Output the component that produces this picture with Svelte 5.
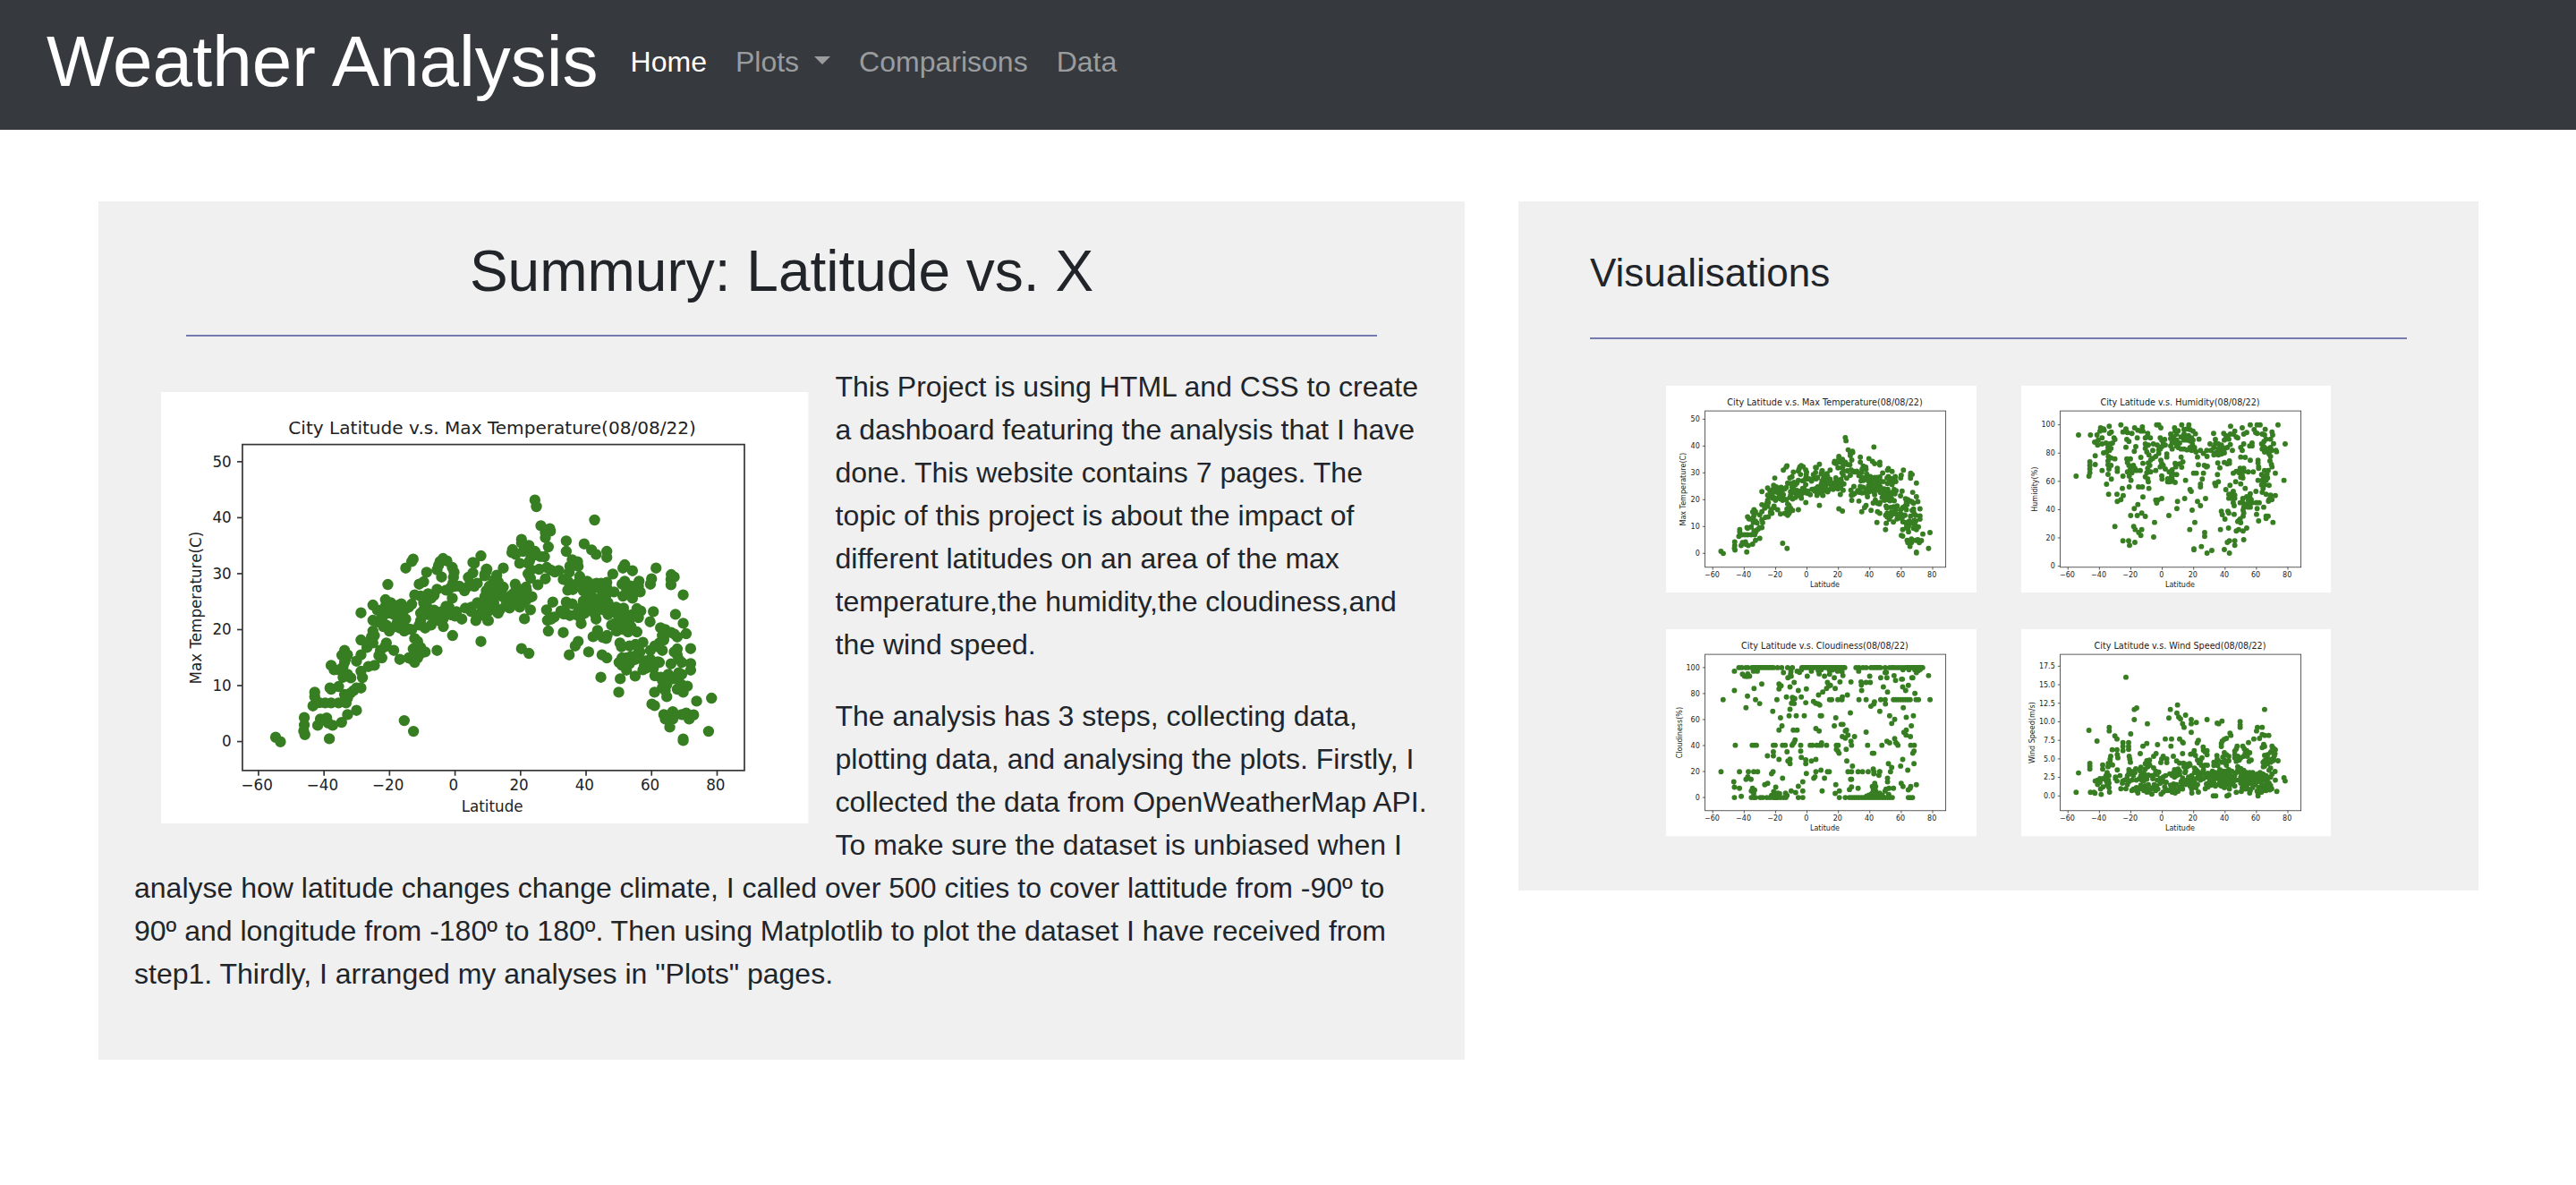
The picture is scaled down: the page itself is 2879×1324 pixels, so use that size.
<script lang="ts">
  type Chart = {
    title: string;
    ylabel: string;
    labelX: number;
    ticks: { y: number; text: string }[];
    origin: [number, number];
    scale: number;
    points: [number, number][];
  };

  const parse = (text: string, shift = 0): [number, number][] =>
    text.split(',').map((pair) => {
      const [x, y] = pair.trim().split(' ').map(Number);
      return [x + shift, y];
    });
  const row = (y: number, xs: number[]): [number, number][] => xs.map((x) => [x, y]);
  const span = (from: number, to: number, step = 8) =>
    Array.from({ length: Math.floor((to - from) / step) + 1 }, (_, i) => from + i * step);
  const axis = (zero: number, top: number, labels: string[]) =>
    labels.map((text, i) => ({ text, y: zero - ((zero - top) * i) / (labels.length - 1) }));
  const dots = (points: [number, number][]) => points.map(([x, y]) => `M${x} ${y}h0`).join('');

  const xTicks = [-60, -40, -20, 0, 20, 40, 60, 80].map((v) => ({
    x: 196.2 + v * 2.186,
    text: v < 0 ? `−${-v}` : `${v}`
  }));

  const temperatureSouth = parse('144 851,160 866,240 785,240 810,238 830,242 842,324 856,285 811,294 790,315 786,320 803,335 811,365 801,385 775,415 761,269 746,275 700,275 715,290 735,310 736,330 736,355 736,380 736,385 720,375 708,395 703,405 695,415 686,430 686,326 686,330 690,355 681,370 650,385 640,396 652,435 651,430 630,455 614,475 610,330 610,340 625,355 625,370 615,375 600,375 560,366 576,385 575,378 590,415 596,430 575,450 550,465 530,470 535,465 515,430 525,470 495,475 510,495 560,490 577,500 585,515 535,510 548,540 560,560 590,470 459,490 465,505 480,525 495,515 475,500 455,430 434,470 408,485 425,500 430,512 390,515 400,530 400,510 415,525 420,540 410,550 410,565 404,570 420,555 430,540 440,520 435,500 440,590 415,600 405,580 420,570 440,580 455,565 465,545 480,560 485,575 495,590 488,600 490,550 470,520 339,580 284,605 254,600 262,610 374,625 338,640 330,650 298,630 378,645 385,655 370,665 385,675 375,685 355,640 400,650 410,630 435,640 425,655 440,675 425,670 440,630 460,625 475,645 485,665 475,680 460,690 450,705 455,706 480,685 560,737 510,736 385,610 520,620 530,605 555,590 585,610 600,625 575,645 565,620 585,630 550,615 560,630 570,600 590,685 290,690 275,695 262,705 252,718 260,700 314,736 282,742 298,740 315,738 335,715 358,730 350,745 345,760 345,777 360,790 345,810 345,820 335,790 315,805 300,810 268,805 265,832 243,850 288,845 310,850 295,715 412,725 415,700 430,710 445,730 440,745 445,750 430,768 455,780 418,800 415,800 430,815 460,825 445,835 430,845 420,830 405,850 400,857 460,865 420,885 420,890 435,860 385,845 380,870 365,880 350,890 330,885 308,870 385,890 370,855 430,875 400,820 400,832 530,575 795,606 831');
  const temperatureNorth = parse('173 56,178 78,373 123,193 142,223 152,208 165,215 158,225 160,208 182,218 213,278 193,278 228,338 203,363 223,378 238,414 228,414 248,128 188,128 200,153 208,140 222,98 222,96 232,108 238,133 228,173 228,180 240,205 246,190 245,160 248,122 268,150 268,155 260,12 288,5 305,67 284,150 303,158 318,160 290,187 288,208 320,183 340,213 282,225 290,253 292,240 297,298 256,316 263,290 278,318 278,305 275,288 298,268 322,285 330,295 340,283 358,300 356,323 312,320 330,335 345,348 328,335 360,350 345,345 370,365 338,380 335,395 335,414 332,375 350,360 360,390 350,405 345,414 350,438 364,434 304,468 284,474 273,500 293,579 284,630 306,640 314,629 322,629 340,670 374,564 320,560 338,474 328,465 338,485 342,480 355,497 345,522 328,520 345,526 364,500 355,468 378,500 385,485 360,495 370,45 308,40 320,32 335,20 345,30 350,45 345,67 348,10 360,20 370,35 370,50 365,60 370,68 382,30 385,10 385,15 400,20 410,10 420,5 440,15 460,30 420,48 434,55 425,35 350,107 338,110 350,143 348,125 355,118 365,100 370,90 378,110 380,130 375,145 360,163 380,80 385,95 390,110 400,122 415,135 400,145 390,88 418,75 410,80 400,65 380,158 424,138 454,128 554,153 570,233 398,212 424,278 398,298 404,260 428,275 432,270 438,290 443,238 448,228 455,215 459,218 495,268 500,320 428,330 415,340 405,335 395,345 425,310 440,325 450,328 470,355 425,350 395,360 400,340 435,375 440,378 455,365 420,375 405,385 410,370 385,350 370,355 380,385 390,400 370,410 380,405 395,418 400,395 385,410 410,405 425,418 440,425 415,445 415,440 430,450 440,470 418,465 430,480 440,460 450,455 465,440 470,430 475,450 480,465 475,480 480,485 498,495 480,488 465,470 490,447 495,515 420,528 428,515 435,520 450,500 440,570 430,559 464,644 439,670 469,515 498,383 493,368 514,380 505,400 516,415 510,412 520,318 530,308 545,288 575,353 565,398 575,414 585,458 535,463 548,490 545,510 540,535 533,520 550,525 565,515 575,505 585,495 580,510 590,490 590,480 585,465 585,455 600,465 610,475 615,480 626,490 605,500 590,394 650,459 655,454 700,509 646,545 595,540 610,550 605,560 600,545 620,535 625,570 620,590 600,560 590,575 645,595 650,600 660,560 560,575 545,590 535,605 525,600 510,594 484,610 490,630 500,605 515,590 550,600 560,650 515,640 505,680 504,650 555,640 565,650 575,655 590,665 600,629 605,695 554,695 604,695 626,585 598,620 640,635 655,620 660,615 675,605 670,600 685,610 695,615 715,610 655,655 635,665 640,645 655,650 690,670 700,684 680,670 685,665 675,574 700,565 740,574 745,605 775,620 778,635 765,635 790,620 795,610 790,625 817,665 775,680 770,690 790,705 776,715 730,765 720,755 831,670 857,670 862', 840);

  const humidityPoints = parse('246 198,238 336,286 198,308 198,320 174,330 178,318 185,325 208,332 182,349 169,350 193,356 188,365 208,368 213,300 222,312 215,310 232,325 228,338 225,350 228,360 225,345 240,355 243,330 258,340 255,350 250,302 268,302 297,284 288,284 300,284 312,284 325,281 336,325 317,346 270,355 275,368 278,345 285,345 298,355 300,348 312,345 330,356 346,340 363,347 397,375 397,376 421,388 415,396 401,393 377,376 310,376 320,395 336,388 164,395 188,405 178,410 190,425 193,408 213,415 220,434 174,445 182,460 171,455 185,462 185,443 208,405 239,438 237,433 253,408 278,420 278,410 290,415 300,420 310,410 322,416 336,422 350,430 300,435 310,440 317,453 317,425 325,416 372,447 372,460 372,455 273,462 293,478 193,475 205,487 208,470 208,470 228,480 232,470 243,475 255,482 265,497 228,510 232,495 250,515 248,505 270,495 277,488 282,480 292,485 300,478 310,475 325,488 322,470 338,478 345,480 355,482 377,505 317,508 164,515 164,522 174,520 208,525 215,535 213,530 225,537 232,525 238,520 245,515 260,522 283,525 293,520 305,530 300,537 312,525 335,526 346,542 272,542 262,555 195,555 210,560 222,555 235,560 245,568 174,570 185,580 184,575 195,565 205,560 210,575 215,570 225,575 235,585 225,592 164,616 164,600 180,610 178,620 180,630 185,638 194,600 195,590 205,605 205,615 200,625 208,600 215,610 215,620 218,630 215,590 245,580 240,600 245,610 248,620 240,628 230,635 240,625 250,640 255,650 212,655 250,590 272,596 288,585 295,592 306,570 293,572 305,560 315,550 322,545 345,552 355,560 345,558 335,565 330,575 331,570 357,605 350,545 355,555 354,648 298,645 272,636 250,676 250,677 270,665 260,675 305,678 303,668 300,632 326,641 326,665 326,661 346,655 363,655 372,620 381,624 387,578 421,576 445,602 411,645 421,655 435,627 450,672 411,549 468,501 491,498 540,462 406,482 377,445 431,433 445,458 460,470 471,421 468,443 468,431 505,436 515,448 525,458 515,455 535,368 505,395 553,414 553,417 568,435 558,619 515,636 491,633 580,633 583,658 572,505 416,512 416,525 411,508 426,699 193,705 213,733 193,740 200,745 205,756 169,755 195,765 195,770 185,775 205,780 208,795 174,800 195,810 190,822 164,845 164,855 164,835 180,840 190,845 193,872 179,862 195,870 198,895 188,897 198,875 212,890 212,915 164,939 228,900 227,687 228,705 228,700 240,715 228,725 232,730 240,715 245,725 250,735 245,720 255,705 258,700 265,715 265,725 262,735 258,690 250,745 240,755 230,762 250,750 212,735 215,713 292,720 308,735 290,745 295,752 285,752 293,775 320,765 326,788 310,800 310,795 318,785 325,795 335,790 340,797 342,800 320,815 322,832 322,790 272,805 273,795 250,790 240,800 228,820 235,828 225,828 235,822 283,848 283,850 310,848 292,850 305,870 317,882 317,878 330,880 342,875 350,865 335,860 331,862 350,870 365,865 377,848 350,860 365,862 390,885 367,885 262,890 270,865 235,862 245,870 240,880 245,890 240,895 250,908 250,910 254,885 255,870 255,860 228,868 220,888 285,893 297,895 305,906 326,935 350,712 331,715 355,703 360,706 368,790 362,773 355,805 377,841 387,754 367,740 381,750 397,760 395,765 387,770 400,750 410,760 410,770 410,765 425,768 435,845 425,797 411,797 425,788 425,803 435,810 405,822 395,820 405,815 415,825 415,820 425,828 425,810 430,815 440,822 440,800 441,798 450,800 460,798 470,842 425,852 425,845 445,867 440,875 397,890 400,888 412,885 415,895 415,883 420,906 401,843 464,725 454,728 465,747 454,750 460,768 464,737 480,785 484,780 488,790 492,788 480,850 486,875 470,882 470,875 478,898 491,722 515,749 510,775 520,783 515,798 520,810 510,745 558,752 553,770 553,770 568,800 549,735 582,752 594,677 594,693 585,669 525,669 538');

  const cloudinessPoints = [
    ...row(168, [308, 318, 332, 338, 438, 452, 472, 488, 702, 712, 725, 736, 800, 815, 822, 830, 840, 850, 860, ...span(352, 428), ...span(520, 664), ...span(752, 786), ...span(870, 928)]),
    ...row(276, [255, 364, 436, 613, 620, 641, 655, 712, 736, 785, 800, 904, 912, 951, ...span(828, 884)]),
    ...row(429, [296, 353, 360, 367, 424, 430, 455, 464, 487, 516, 548, 555, 570, 578, 585, 603, 636, 642, 687, 741, 789, 843, 886, 898]),
    ...row(518, [248, 310, 340, 358, 371, 423, 567, 606, 612, 675, 687, 709, 724, 743, 762, 781, 818]),
    ...row(605, [293, 350, 358, 364, 380, 388, 402, 412, 425, 432, 438, 448, 458, 466, 508, 523, 646, 666, 878, 885, 892, ...span(680, 824)]),
    ...parse('293 180,320 190,327 197,338 189,335 198,344 197,357 180,370 180,360 176,458 185,483 182,484 197,473 202,482 190,504 180,512 184,518 176,538 197,552 180,578 189,575 178,585 175,596 197,613 190,629 202,612 176,623 176,640 180,650 174,658 195,655 182,648 178,711 180,748 197,785 202,806 202,800 185,804 184,830 195,835 211,855 207,858 207,890 202,893 202,905 185,912 178,860 175,880 175,900 176,918 174,946 195,385 223,359 238,293 245,337 264,332 303,378 289,422 315,443 223,450 229,443 240,480 233,494 218,508 245,535 240,468 267,518 267,488 268,496 272,485 288,494 289,490 278,533 286,480 308,477 330,501 330,528 330,448 337,453 364,443 378,491 378,504 378,559 282,566 288,580 294,575 290,576 260,590 250,603 238,610 230,616 228,606 218,648 216,632 238,656 267,654 276,673 260,685 216,719 216,720 226,736 218,750 218,721 245,794 233,808 250,859 233,869 245,878 228,900 255,764 283,752 298,762 290,801 290,861 303,582 330,586 330,683 320,782 315,815 330,832 342,822 356,871 335,895 330,634 337,629 364,652 359,658 359,567 373,578 381,666 381,670 378,656 400,666 405,675 395,697 400,685 416,736 385,888 364,871 378,863 386,870 395,885 400,497 411,494 419,490 425,586 421,806 416,815 421,832 407,836 420,840 425,893 456,897 449,424 451,470 451,516 449,404 465,424 465,518 470,533 478,533 491,552 482,567 477,480 476,473 482,480 491,443 477,636 443,645 456,641 449,669 443,671 482,690 499,757 456,762 456,859 477,852 499,811 491,822 504,897 491,876 513,760 509,762 525,779 530,782 518,535 524,584 513,560 540,564 535,596 540,332 544,349 544,338 535,418 525,455 540,395 562,405 557,291 552,293 570,310 574,316 601,354 574,361 580,350 583,358 590,432 570,425 585,432 590,440 590,445 592,425 595,418 598,465 590,470 598,484 583,499 588,508 567,523 552,523 583,588 583,634 562,632 591,646 583,684 544,687 544,687 569,680 578,709 574,765 557,768 568,757 568,760 580,768 583,755 592,745 597,770 595,782 590,790 597,800 583,803 577,813 574,828 574,808 540,808 552,854 557,860 568,905 562,886 568,878 579,884 574,780 598,812 595,738 600')
  ];

  const windPoints = parse('405 200,433 308,441 303,433 342,477 356,281 378,308 414,349 368,349 380,368 397,375 407,421 390,554 308,578 293,576 320,549 337,582 334,588 340,605 327,595 356,600 368,624 342,624 356,641 352,624 385,677 342,711 354,716 356,727 347,788 349,788 360,788 368,870 308,846 368,862 368,843 380,754 388,757 395,862 392,870 395,884 395,853 405,834 407,816 419,742 405,735 408,728 414,725 422,725 432,537 407,558 407,556 431,585 407,595 418,597 420,648 412,644 420,511 426,475 422,462 431,395 419,395 432,395 446,414 419,414 432,414 442,359 443,375 443,376 460,378 470,354 465,352 475,453 456,506 456,498 465,564 465,595 456,284 489,284 498,284 508,246 521,238 586,327 494,327 508,346 489,360 494,345 500,352 485,376 511,342 520,338 530,348 530,346 545,338 545,328 540,318 540,302 548,310 545,318 552,310 560,320 575,328 568,342 562,348 570,350 585,322 593,286 586,298 586,301 589,340 550,348 555,370 540,375 548,370 535,385 530,388 574,405 574,393 555,400 545,408 540,415 550,410 560,394 548,410 530,415 520,415 510,420 515,425 525,433 515,438 507,435 520,430 530,440 545,425 545,420 485,416 465,418 475,455 502,453 515,465 520,470 508,478 500,470 490,485 495,482 485,475 480,484 478,498 504,505 515,515 518,510 525,500 528,490 530,480 528,465 535,455 530,450 540,458 545,465 548,475 542,495 540,430 575,425 580,440 580,440 570,445 588,450 575,460 570,455 562,465 580,475 585,480 575,470 565,480 560,490 575,485 585,492 592,495 570,500 560,508 565,505 580,512 575,520 555,510 545,520 540,530 550,540 552,530 535,538 530,523 592,530 585,538 575,535 568,545 580,555 575,560 585,570 588,575 578,580 582,565 570,555 562,565 558,575 560,585 570,592 565,595 575,522 486,525 474,542 474,542 486,530 465,558 524,552 524,568 510,565 520,575 515,580 508,585 515,575 530,568 535,560 530,585 525,575 481,585 488,598 488,605 492,600 500,605 515,603 520,618 490,620 495,610 500,595 538,590 550,600 552,610 545,615 535,605 560,612 555,620 565,626 588,625 575,630 560,622 548,630 540,625 530,635 520,640 510,635 505,645 515,648 530,640 540,635 550,645 560,640 570,648 585,655 545,665 540,655 530,660 520,672 525,665 510,622 458,634 446,630 456,638 462,660 470,655 480,650 487,658 495,670 495,678 495,664 434,665 445,677 446,677 460,670 450,645 478,671 574,680 568,675 558,685 550,690 540,680 535,690 525,680 522,695 515,700 530,705 520,710 463,711 475,700 485,715 480,700 496,713 496,735 453,742 460,750 465,730 468,735 478,728 485,740 490,750 480,742 495,720 510,730 515,740 515,750 510,760 515,755 525,745 525,735 525,725 525,715 520,710 530,720 535,730 540,740 535,750 540,760 535,770 530,765 540,775 520,780 512,720 550,730 555,740 550,750 555,715 560,705 565,725 565,735 570,745 560,760 560,765 550,775 545,770 565,752 575,690 562,700 555,695 545,705 540,778 431,775 440,770 448,770 460,770 470,780 465,790 470,785 478,775 482,797 431,802 440,810 446,820 453,805 455,800 465,812 465,825 478,818 482,780 500,790 506,800 512,790 520,800 525,810 520,820 520,830 520,815 530,825 530,835 528,800 535,790 535,785 545,795 545,805 545,815 540,825 540,835 545,790 555,800 560,810 555,820 555,830 560,795 570,805 575,815 575,810 565,775 586,792 583,820 588,822 580,830 570,840 560,845 550,840 535,845 525,855 520,850 530,860 530,855 540,865 540,855 550,860 560,850 570,865 525,875 530,870 545,880 540,875 555,885 555,865 570,875 565,885 570,890 563,845 582,855 583,865 580,875 580,888 578,894 574,848 590,860 585,862 436,867 425,870 432,895 431,900 438,906 443,905 455,895 445,890 452,870 462,880 460,875 470,885 475,895 478,870 480,865 485,870 498,866 500,880 490,890 485,898 480,903 463,900 470,880 483,915 480,890 505,885 512,905 516,895 525,890 535,906 545,935 537,939 548,911 583,698 598,706 598,744 598,750 595,848 598');

  const temperature: Chart = {
    title: 'City Latitude v.s. Max Temperature(08/08/22)',
    ylabel: 'Max Temperature(C)',
    labelX: 27,
    ticks: axis(233.2, 46.5, ['0', '10', '20', '30', '40', '50']),
    origin: [47.8, 60.9],
    scale: 0.1991,
    points: [...temperatureSouth, ...temperatureNorth]
  };
  const humidity: Chart = {
    title: 'City Latitude v.s. Humidity(08/08/22)',
    ylabel: 'Humidity(%)',
    labelX: 22,
    ticks: axis(251, 54.4, ['0', '20', '40', '60', '80', '100']),
    origin: [-22.4, -13.7],
    scale: 0.415,
    points: humidityPoints
  };
  const cloudiness: Chart = {
    title: 'City Latitude v.s. Cloudiness(08/08/22)',
    ylabel: 'Cloudiness(%)',
    labelX: 22,
    ticks: axis(234.2, 53.4, ['0', '20', '40', '60', '80', '100']),
    origin: [-26.1, -16.1],
    scale: 0.4138,
    points: cloudinessPoints
  };
  const wind: Chart = {
    title: 'City Latitude v.s. Wind Speed(08/08/22)',
    ylabel: 'Wind Speed(m/s)',
    labelX: 19,
    ticks: axis(232, 51.5, ['0.0', '2.5', '5.0', '7.5', '10.0', '12.5', '15.0', '17.5']),
    origin: [-22.4, -16.2],
    scale: 0.415,
    points: windPoints
  };
  const thumbnails = [temperature, humidity, cloudiness, wind];
</script>

{#snippet plot(chart: Chart)}
  <svg class="plot" viewBox="0 0 432 288" role="img" aria-label={chart.title}>
    <rect class="paper" width="432" height="288" />
    <path
      class="dots"
      transform="translate({chart.origin[0]} {chart.origin[1]}) scale({chart.scale})"
      stroke-width={7.4 / chart.scale}
      d={dots(chart.points)}
    />
    <rect class="frame" x="54.3" y="35" width="335" height="217.5" />
    {#each xTicks as tick}
      <path class="frame" d="M{tick.x} 252.5v3.5" />
      <text class="label middle" x={tick.x - 1} y="266">{tick.text}</text>
    {/each}
    {#each chart.ticks as tick}
      <path class="frame" d="M54.3 {tick.y}h-3.5" />
      <text class="label end" x="47" y={tick.y + 3.5}>{tick.text}</text>
    {/each}
    <text class="title middle" x="221" y="28">{chart.title}</text>
    <text class="label middle" x="221" y="280">Latitude</text>
    <text class="label middle" transform="translate({chart.labelX} 144) rotate(-90)">{chart.ylabel}</text>
  </svg>
{/snippet}

<nav class="navbar" aria-label="Main">
  <a class="brand" href="#home">Weather Analysis</a>
  <ul class="links">
    <li><a class="link active" href="#home" aria-current="page">Home</a></li>
    <li><button class="link toggle" type="button" aria-haspopup="true">Plots<span class="caret"></span></button></li>
    <li><a class="link" href="#comparisons">Comparisons</a></li>
    <li><a class="link" href="#data">Data</a></li>
  </ul>
</nav>

<main class="page">
  <article class="card summary">
    <h1>Summury: Latitude vs. X</h1>
    <hr />
    <div class="hero">{@render plot(temperature)}</div>
    <p>
      This Project is using HTML and CSS to create a dashboard featuring the analysis that I have
      done. This website contains 7 pages. The topic of this project is about the impact of
      different latitudes on an area of the max temperature,the humidity,the cloudiness,and the wind
      speed.
    </p>
    <p>
      The analysis has 3 steps, collecting data, plotting data, and analysing the plots. Firstly, I
      collected the data from OpenWeatherMap API. To make sure the dataset is unbiased when I
      analyse how latitude changes change climate, I called over 500 cities to cover lattitude from
      -90º to 90º and longitude from -180º to 180º. Then using Matplotlib to plot the dataset I have
      received from step1. Thirdly, I arranged my analyses in "Plots" pages.
    </p>
  </article>

  <aside class="card visuals">
    <h2>Visualisations</h2>
    <hr />
    <div class="gallery">
      {#each thumbnails as chart}
        <a href="#plots" aria-label={chart.title}>{@render plot(chart)}</a>
      {/each}
    </div>
  </aside>
</main>

<style>
  :global(body) {
    background: #fff;
    color: #212529;
    font: 32px/48px 'Liberation Sans', Arial, sans-serif;
  }
  .navbar {
    display: flex;
    align-items: center;
    gap: 20px;
    padding: 21px 52px 28px;
    background: #363a3f;
  }
  .brand {
    color: #fff;
    font-size: 80px;
    line-height: 96px;
    text-decoration: none;
  }
  .links {
    display: flex;
    margin: 0;
    padding: 0;
    list-style: none;
  }
  .link {
    display: block;
    padding: 0 16px;
    border: 0;
    background: none;
    color: #9a9c9e;
    font: inherit;
    text-decoration: none;
    cursor: pointer;
  }
  .link.active {
    color: #fff;
  }
  .toggle {
    display: flex;
    align-items: center;
    gap: 17px;
  }
  .caret {
    margin-bottom: 4px;
    border: 9px solid transparent;
    border-top-color: currentColor;
    border-bottom: 0;
  }
  .page {
    display: grid;
    grid-template-columns: 1527fr 1073fr;
    align-items: start;
    gap: 60px;
    padding: 80px 109px 80px 110px;
  }
  .card {
    background: #f0f0f0;
  }
  h1,
  h2 {
    margin: 0;
    font-weight: 400;
  }
  h1 {
    font-size: 64px;
    line-height: 77px;
    text-align: center;
  }
  h2 {
    font-size: 44px;
    line-height: 53px;
  }
  hr {
    height: 2px;
    margin: 32px auto;
    border: 0;
    background: #757bb0;
  }
  .summary {
    padding: 40px;
  }
  .summary hr {
    width: 92%;
  }
  .hero {
    float: left;
    width: 50%;
    margin: 30px;
  }
  p {
    margin: 0 0 32px;
  }
  .visuals {
    padding: 53px 80px 60px;
  }
  .visuals hr {
    margin: 46px 0 52px;
  }
  .gallery {
    display: grid;
    grid-template-columns: 38% 38%;
    justify-content: center;
    gap: 41px 50px;
  }
  .gallery a {
    display: block;
  }
  .plot {
    display: block;
    width: 100%;
    height: auto;
    font-family: 'DejaVu Sans', sans-serif;
  }
  .paper {
    fill: #fff;
  }
  .dots {
    fill: none;
    stroke: #377e22;
    stroke-linecap: round;
  }
  .frame {
    fill: none;
    stroke: #333;
    stroke-width: 1px;
  }
  .title,
  .label {
    fill: #222;
  }
  .title {
    font-size: 12px;
  }
  .label {
    font-size: 10px;
  }
  .middle {
    text-anchor: middle;
  }
  .end {
    text-anchor: end;
  }
</style>
